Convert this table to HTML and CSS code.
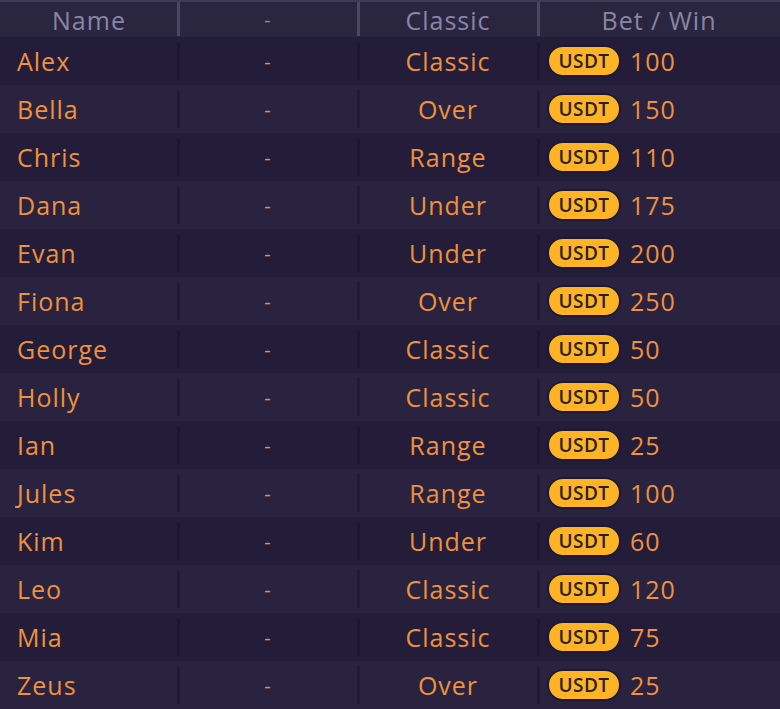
FILE: index.html
```html
<!DOCTYPE html>
<html>
<head>
<meta charset="utf-8">
<link rel="stylesheet" href="styles.css">
</head>
<body>
<div class="table">
  <div class="row head">
    <div class="cell c1">Name</div>
    <div class="cell c2">-</div>
    <div class="cell c3">Classic</div>
    <div class="cell c4h">Bet / Win</div>
  </div>
  <div class="row"><div class="cell n">Alex</div><div class="cell c2">-</div><div class="cell c3">Classic</div><div class="cell c4"><span class="badge">USDT</span><span class="amt">100</span></div></div>
  <div class="row"><div class="cell n">Bella</div><div class="cell c2">-</div><div class="cell c3">Over</div><div class="cell c4"><span class="badge">USDT</span><span class="amt">150</span></div></div>
  <div class="row"><div class="cell n">Chris</div><div class="cell c2">-</div><div class="cell c3">Range</div><div class="cell c4"><span class="badge">USDT</span><span class="amt">110</span></div></div>
  <div class="row"><div class="cell n">Dana</div><div class="cell c2">-</div><div class="cell c3">Under</div><div class="cell c4"><span class="badge">USDT</span><span class="amt">175</span></div></div>
  <div class="row"><div class="cell n">Evan</div><div class="cell c2">-</div><div class="cell c3">Under</div><div class="cell c4"><span class="badge">USDT</span><span class="amt">200</span></div></div>
  <div class="row"><div class="cell n">Fiona</div><div class="cell c2">-</div><div class="cell c3">Over</div><div class="cell c4"><span class="badge">USDT</span><span class="amt">250</span></div></div>
  <div class="row"><div class="cell n">George</div><div class="cell c2">-</div><div class="cell c3">Classic</div><div class="cell c4"><span class="badge">USDT</span><span class="amt">50</span></div></div>
  <div class="row"><div class="cell n">Holly</div><div class="cell c2">-</div><div class="cell c3">Classic</div><div class="cell c4"><span class="badge">USDT</span><span class="amt">50</span></div></div>
  <div class="row"><div class="cell n">Ian</div><div class="cell c2">-</div><div class="cell c3">Range</div><div class="cell c4"><span class="badge">USDT</span><span class="amt">25</span></div></div>
  <div class="row"><div class="cell n">Jules</div><div class="cell c2">-</div><div class="cell c3">Range</div><div class="cell c4"><span class="badge">USDT</span><span class="amt">100</span></div></div>
  <div class="row"><div class="cell n">Kim</div><div class="cell c2">-</div><div class="cell c3">Under</div><div class="cell c4"><span class="badge">USDT</span><span class="amt">60</span></div></div>
  <div class="row"><div class="cell n">Leo</div><div class="cell c2">-</div><div class="cell c3">Classic</div><div class="cell c4"><span class="badge">USDT</span><span class="amt">120</span></div></div>
  <div class="row"><div class="cell n">Mia</div><div class="cell c2">-</div><div class="cell c3">Classic</div><div class="cell c4"><span class="badge">USDT</span><span class="amt">75</span></div></div>
  <div class="row"><div class="cell n">Zeus</div><div class="cell c2">-</div><div class="cell c3">Over</div><div class="cell c4"><span class="badge">USDT</span><span class="amt">25</span></div></div>
</div>
</body>
</html>
```
FILE: styles.css
```css
html, body {
  margin: 0;
  padding: 0;
  background: #231d3a;
}
body {
  font-family: "Open Sans", "Noto Sans", sans-serif;
  width: 780px;
  height: 709px;
  overflow: hidden;
}
.table {
  border-top: 2px solid #3e3a58;
  border-bottom: 2px solid #b9b5d6;
  display: flex;
  flex-direction: column;
}
.row {
  display: grid;
  grid-template-columns: 178px 180px 180px 1fr;
  height: 48px;
  align-items: center;
  background: #231d3a;
  color: #f0913b;
  font-size: 25px;
  letter-spacing: 1px;
}
.row:nth-child(odd) {
  background: #29233f;
}
.row.head {
  height: 35px;
  background: #2a2640;
  color: #8985a6;
}
.cell {
  height: 100%;
  display: flex;
  align-items: center;
  position: relative;
  box-sizing: border-box;
}
.c1, .c2, .c3, .c4h { justify-content: center; }
.n { padding-left: 17px; }
.row .c2::before, .row .c3::before, .row .c4::before, .row .c4h::before {
  content: "";
  position: absolute;
  left: -1px;
  top: 5px;
  bottom: 5px;
  width: 3px;
  background: rgba(15, 10, 35, 0.3);
}
.row.head .c2::before, .row.head .c3::before, .row.head .c4h::before {
  top: 0;
  bottom: 1px;
  background: #4a4668;
}
.c2 { font-size: 20px; }
.c4 { padding-left: 9px; gap: 9px; }
.badge {
  display: inline-flex;
  align-items: center;
  justify-content: center;
  width: 74px;
  height: 32px;
  box-sizing: border-box;
  border: 2px solid #201733;
  border-radius: 16px;
  background: #ffb425;
  color: #2a1f2c;
  font-size: 19px;
  font-weight: 600;
  letter-spacing: 0.5px;
}
.amt { line-height: 1; }
```
